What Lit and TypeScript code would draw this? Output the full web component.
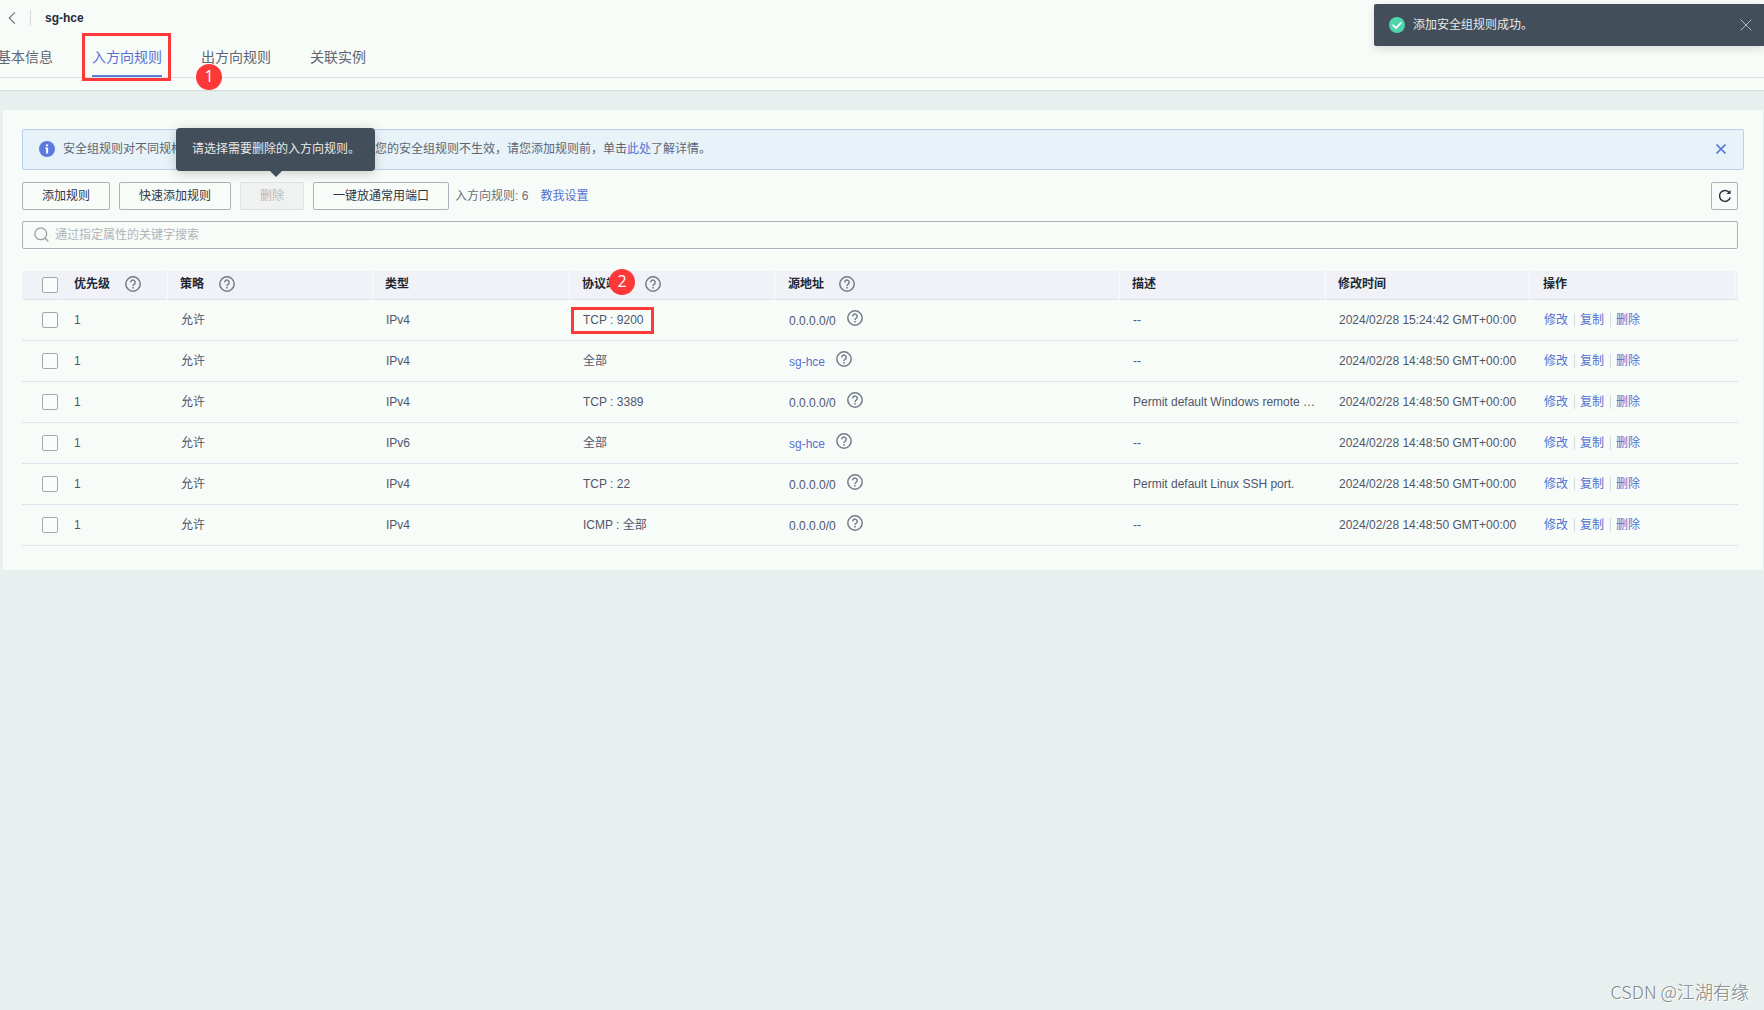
import { LitElement, html, css, svg, nothing } from "lit";
import { customElement } from "lit/decorators.js";
import { classMap } from "lit/directives/class-map.js";

interface Rule {
  priority: number;
  policy: string;
  type: string;
  port: string;
  source: string;
  linked?: boolean;
  description: string;
  modified: string;
  marked?: boolean;
}

const RULES: Rule[] = [
  { priority: 1, policy: "允许", type: "IPv4", port: "TCP : 9200", source: "0.0.0.0/0", description: "--", modified: "2024/02/28 15:24:42 GMT+00:00", marked: true },
  { priority: 1, policy: "允许", type: "IPv4", port: "全部", source: "sg-hce", linked: true, description: "--", modified: "2024/02/28 14:48:50 GMT+00:00" },
  { priority: 1, policy: "允许", type: "IPv4", port: "TCP : 3389", source: "0.0.0.0/0", description: "Permit default Windows remote desktop port.", modified: "2024/02/28 14:48:50 GMT+00:00" },
  { priority: 1, policy: "允许", type: "IPv6", port: "全部", source: "sg-hce", linked: true, description: "--", modified: "2024/02/28 14:48:50 GMT+00:00" },
  { priority: 1, policy: "允许", type: "IPv4", port: "TCP : 22", source: "0.0.0.0/0", description: "Permit default Linux SSH port.", modified: "2024/02/28 14:48:50 GMT+00:00" },
  { priority: 1, policy: "允许", type: "IPv4", port: "ICMP : 全部", source: "0.0.0.0/0", description: "--", modified: "2024/02/28 14:48:50 GMT+00:00" },
];

const HEADERS = [
  { label: "优先级", help: true, cls: "c-priority" },
  { label: "策略", help: true, cls: "c-policy" },
  { label: "类型", help: false, cls: "c-type" },
  { label: "协议端口", help: true, cls: "c-port" },
  { label: "源地址", help: true, cls: "c-source" },
  { label: "描述", help: false, cls: "c-desc" },
  { label: "修改时间", help: false, cls: "c-time" },
  { label: "操作", help: false, cls: "c-ops" },
];

const TABS = ["基本信息", "入方向规则", "出方向规则", "关联实例"];

const helpIcon = html`<svg class="help" viewBox="0 0 16 16" aria-hidden="true">
  ${svg`<circle cx="8" cy="8" r="7.2" fill="none" stroke="currentColor" stroke-width="1.5"/>
  <path d="M5.8 6.4a2.2 2.2 0 1 1 3.5 1.7C8.5 8.7 8 9 8 9.9" fill="none" stroke="currentColor" stroke-width="1.5"/>
  <rect x="7.2" y="10.9" width="1.6" height="1.6" fill="currentColor"/>`}
</svg>`;

const crossIcon = html`<svg class="cross" viewBox="0 0 12 12" aria-hidden="true">
  <path d="M0.6 0.6L11.4 11.4M11.4 0.6L0.6 11.4" fill="none" stroke="currentColor" />
</svg>`;

@customElement("app-root")
export class AppRoot extends LitElement {
  static styles = css`
    :host {
      display: block;
      position: relative;
      min-height: 100vh;
      overflow: hidden;
      background: #e8f0ef;
      color: #50566a;
      font: 12px/18px "Liberation Sans", "Noto Sans CJK SC", sans-serif;
    }
    * { box-sizing: border-box; }
    svg { display: block; flex: none; }
    button, input { font: inherit; color: inherit; }
    button { margin: 0; padding: 0; border: 0; background: none; cursor: pointer; }
    a { color: #5670d0; text-decoration: none; }

    .top {
      background: #f8fcf9;
      border-bottom: 1px solid #d3dad9;
      padding-bottom: 12px;
    }
    .title {
      display: flex;
      align-items: center;
      height: 36px;
      padding-left: 8px;
    }
    .back svg { width: 8px; height: 12px; color: #6b7280; }
    .rule { width: 1px; height: 16px; margin: 0 14px; background: #d5dadc; }
    h1 { margin: 0; font-size: 12px; line-height: 18px; color: #252b3a; }

    .tabs {
      display: flex;
      gap: 39px;
      margin-left: -3px;
      border-bottom: 1px solid #dbe0e0;
    }
    .tab {
      position: relative;
      height: 41px;
      font-size: 14px;
      line-height: 20px;
      color: #60666f;
      white-space: nowrap;
    }
    .tab.on { color: #5670d0; border-bottom: 2px solid #5c7ade; padding-top: 2px; }
    .frame { position: absolute; border: 3px solid #fc3838; pointer-events: none; }
    .tab-frame { inset: -3px -9px -6px -10px; }
    .badge {
      position: absolute;
      width: 26px;
      height: 26px;
      border-radius: 50%;
      background: #fc3838;
      color: #fff;
      font: 16px/24px "Open Sans", sans-serif;
      text-align: center;
    }
    .tab-badge { left: -5px; top: 28px; }

    .panel {
      margin: 19px 1px 0 3px;
      padding: 19px 25px 24px 19px;
      background: #f8fcf9;
    }
    .alert {
      display: flex;
      align-items: center;
      height: 41px;
      margin-right: -6px;
      padding: 0 17px 1px 16px;
      border: 1px solid #bccdf2;
      border-radius: 2px;
      background: #e8f3f9;
      color: #5c6473;
    }
    .alert p { flex: 1; margin: 0 0 0 8px; }
    .alert .info { width: 16px; height: 16px; }
    .alert button { color: #5c7ade; }
    .alert .cross { width: 10px; height: 10px; stroke-width: 2; }

    .tools { display: flex; align-items: center; gap: 9px; margin-top: 12px; }
    .btn {
      height: 28px;
      padding: 0 19px;
      border: 1px solid #adb0b8;
      border-radius: 2px;
      color: #2f3544;
      white-space: nowrap;
    }
    .btn:disabled { border-color: #dfe1e6; background: #f0f2f1; color: #b5b9c0; }
    .tip-anchor { position: relative; }
    .tip {
      position: absolute;
      bottom: 39px;
      left: 50%;
      width: max-content;
      margin-left: -96px;
      padding: 12px 15px 13px 16px;
      border-radius: 4px;
      background: #424e59;
      color: #e8eaec;
      box-shadow: 0 2px 12px rgba(0, 0, 0, 0.2);
      z-index: 2;
    }
    .tip::after {
      content: "";
      position: absolute;
      top: 100%;
      left: 50%;
      margin-left: -6px;
      border: 6px solid transparent;
      border-top-color: #424e59;
      border-bottom: 0;
    }
    .count { margin: 0 3px 0 -3px; color: #696f7c; }
    .refresh {
      display: grid;
      place-items: center;
      width: 27px;
      height: 28px;
      margin-left: auto;
      border: 1px solid #adb0b8;
      border-radius: 2px;
      color: #2f3544;
    }
    .refresh svg { width: 14px; height: 14px; }
    .search {
      display: flex;
      align-items: center;
      gap: 6px;
      height: 28px;
      margin: 11px 0 22px;
      padding: 0 11px 1px;
      border: 1px solid #adb0b8;
      border-radius: 2px;
    }
    .search svg { width: 15px; height: 15px; color: #9ba0aa; }
    .search input { flex: 1; min-width: 0; padding: 0; border: 0; outline: 0; background: none; }
    .search input::placeholder { color: #b0b4bc; opacity: 1; }

    table { width: 100%; table-layout: fixed; border-collapse: separate; border-spacing: 0; }
    th, td { padding: 0 8px 0 14px; text-align: left; white-space: nowrap; border-bottom: 1px solid #dfe4ec; }
    th {
      height: 29px;
      padding: 0 8px 2px 12px;
      background: #f0f2f8;
      border-left: 1px solid #fafcfd;
      color: #22272f;
    }
    th.c-check, th.c-priority { border-left-color: #f0f2f8; }
    th.c-ops { box-shadow: inset -3px 0 #f0f2f8, inset -4px 0 #fafcfd; }
    td { height: 41px; overflow: hidden; text-overflow: ellipsis; }
    td.c-priority { padding-left: 13px; }
    .c-check { width: 39px; padding: 0 0 0 20px; }
    th.c-check { padding: 0 0 0 19px; }
    .c-priority { width: 106px; }
    .c-policy, .c-port { width: 205px; }
    .c-type { width: 197px; }
    .c-source { width: 345px; }
    .c-desc { width: 206px; }
    .c-time { width: 204px; }
    .c-ops { width: 209px; }
    th.c-source, th.c-ops { padding-left: 13px; }
    td.c-source, td.c-ops { padding-left: 15px; }
    td.c-port { overflow: visible; }
    .head { display: flex; align-items: center; gap: 15px; position: relative; width: max-content; }
    .help { width: 16px; height: 16px; color: #747b8a; }
    .head-badge { left: 27px; top: -6px; }
    input[type="checkbox"] {
      appearance: none;
      display: block;
      width: 16px;
      height: 16px;
      margin: 0;
      border: 1px solid #a5a8aa;
      border-radius: 2px;
      background: #fafdfb;
    }
    input[type="checkbox"]:checked { background: #5c7ade; }
    .port { position: relative; }
    .port-frame { inset: -6px -11px -7px -12px; }
    .source { display: flex; align-items: flex-end; gap: 11px; }
    .source .help { margin-bottom: 4px; }
    .ops { display: flex; align-items: center; }
    .ops a + a { margin-left: 6px; padding-left: 5px; border-left: 1px solid #d5dadc; line-height: 14px; }

    .toast {
      position: absolute;
      top: 4px;
      right: 0;
      display: flex;
      align-items: center;
      width: 390px;
      height: 42px;
      padding: 0 12px 1px 15px;
      border-radius: 2px 0 0 2px;
      background: #424e59;
      color: #e8eaec;
      box-shadow: 0 3px 8px rgba(0, 0, 0, 0.12);
    }
    .toast .ok { width: 16px; height: 16px; }
    .toast span { flex: 1; margin: 0 8px; }
    .toast .cross { width: 12px; height: 12px; color: #b4b9be; }
    .mark {
      position: absolute;
      right: 15px;
      bottom: 7px;
      font: 18px/24px "Noto Sans CJK SC", sans-serif;
      font-weight: 300;
      color: #7f8585;
      text-shadow: 1px 1px 0 #fff;
    }
  `;

  private renderTab(label: string, i: number) {
    return html`<button class=${classMap({ tab: true, on: i === 1 })} role="tab" aria-selected=${i === 1}>
      ${label}
      ${i === 1 ? html`<i class="frame tab-frame"></i>` : nothing}
      ${i === 2 ? html`<i class="badge tab-badge">1</i>` : nothing}
    </button>`;
  }

  private renderRow(r: Rule) {
    return html`<tr>
      <td class="c-check"><input type="checkbox" aria-label="选择" /></td>
      <td class="c-priority">${r.priority}</td>
      <td>${r.policy}</td>
      <td>${r.type}</td>
      <td class="c-port"><span class="port">${r.port}${r.marked ? html`<i class="frame port-frame"></i>` : nothing}</span></td>
      <td class="c-source"><div class="source">${r.linked ? html`<a href="#">${r.source}</a>` : html`<span>${r.source}</span>`}${helpIcon}</div></td>
      <td>${r.description}</td>
      <td>${r.modified}</td>
      <td class="c-ops"><div class="ops"><a href="#">修改</a><a href="#">复制</a><a href="#">删除</a></div></td>
    </tr>`;
  }

  render() {
    return html`
      <header class="top">
        <div class="title">
          <button class="back" aria-label="返回">
            <svg viewBox="0 0 8 12"><path d="M7 0.4L1.2 6L7 11.6" fill="none" stroke="currentColor" stroke-width="1.1" /></svg>
          </button>
          <span class="rule"></span>
          <h1>sg-hce</h1>
        </div>
        <div class="tabs" role="tablist">${TABS.map((t, i) => this.renderTab(t, i))}</div>
      </header>

      <main class="panel">
        <div class="alert">
          <svg class="info" viewBox="0 0 16 16">
            <circle cx="8" cy="8" r="8" fill="#5c7ade" />
            <path d="M6.9 3.4h2.2v1.9H6.9zM6.2 6.6h2.9v6H7.1V7.8h-.9z" fill="#fff" />
          </svg>
          <p>安全组规则对不同规格云服务器的生效情况不同，为了避免您的安全组规则不生效，请您添加规则前，单击<a href="#">此处</a>了解详情。</p>
          <button aria-label="关闭">${crossIcon}</button>
        </div>

        <div class="tools">
          <button class="btn">添加规则</button>
          <button class="btn">快速添加规则</button>
          <span class="tip-anchor">
            <button class="btn" disabled>删除</button>
            <span class="tip" role="tooltip">请选择需要删除的入方向规则。</span>
          </span>
          <button class="btn">一键放通常用端口</button>
          <span class="count">入方向规则: 6</span>
          <a href="#">教我设置</a>
          <button class="refresh" aria-label="刷新">
            <svg viewBox="0 0 14 14">
              <path d="M11.4 3.5A5.5 5.5 0 1 0 12.3 8.6" fill="none" stroke="currentColor" stroke-width="1.5" />
              <path d="M12.6 0.9V5H8.5z" fill="currentColor" />
            </svg>
          </button>
        </div>

        <label class="search">
          <svg viewBox="0 0 15 15" aria-hidden="true">
            <circle cx="6.8" cy="6.8" r="5.9" fill="none" stroke="currentColor" stroke-width="1.3" />
            <path d="M11 11l3.2 3.2" stroke="currentColor" stroke-width="1.5" />
          </svg>
          <input type="text" placeholder="通过指定属性的关键字搜索" aria-label="搜索" />
        </label>

        <table>
          <thead>
            <tr>
              <th class="c-check"><input type="checkbox" aria-label="全选" /></th>
              ${HEADERS.map(
                (h) => html`<th class=${h.cls}><div class="head">
                  <span>${h.label}</span>${h.help ? helpIcon : nothing}
                  ${h.cls === "c-port" ? html`<i class="badge head-badge">2</i>` : nothing}
                </div></th>`
              )}
            </tr>
          </thead>
          <tbody>${RULES.map((r) => this.renderRow(r))}</tbody>
        </table>
      </main>

      <div class="toast" role="status">
        <svg class="ok" viewBox="0 0 16 16">
          <circle cx="8" cy="8" r="8" fill="#50d4ab" />
          <path d="M3.6 7.8L7 11L12.4 5.4" fill="none" stroke="#fff" stroke-width="1.8" />
        </svg>
        <span>添加安全组规则成功。</span>
        <button aria-label="关闭">${crossIcon}</button>
      </div>
      <div class="mark">CSDN @江湖有缘</div>
    `;
  }
}
